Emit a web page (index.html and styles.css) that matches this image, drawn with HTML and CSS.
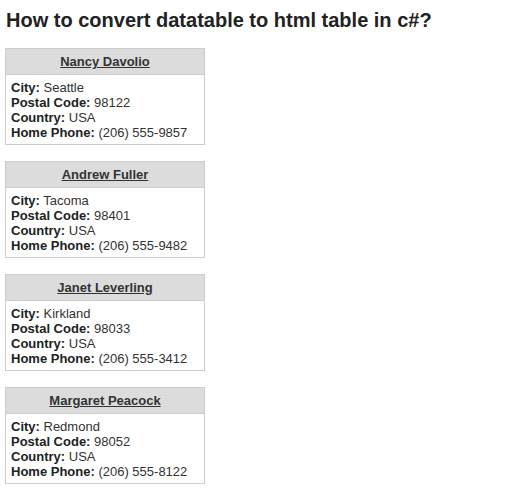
FILE: index.html
```html
<!DOCTYPE html>
<html>
<head>
<meta charset="utf-8">
<link rel="stylesheet" href="styles.css">
</head>
<body>
<h2 class="title">How to convert datatable to html table in c#?</h2>
<div class="list">
  <div class="card">
    <div class="card-head"><a href="#">Nancy Davolio</a></div>
    <div class="card-body">
      <div><b>City:</b> Seattle</div>
      <div><b>Postal Code:</b> 98122</div>
      <div><b>Country:</b> USA</div>
      <div><b>Home Phone:</b> (206) 555-9857</div>
    </div>
  </div>
  <div class="card">
    <div class="card-head"><a href="#">Andrew Fuller</a></div>
    <div class="card-body">
      <div><b>City:</b> Tacoma</div>
      <div><b>Postal Code:</b> 98401</div>
      <div><b>Country:</b> USA</div>
      <div><b>Home Phone:</b> (206) 555-9482</div>
    </div>
  </div>
  <div class="card">
    <div class="card-head"><a href="#">Janet Leverling</a></div>
    <div class="card-body">
      <div><b>City:</b> Kirkland</div>
      <div><b>Postal Code:</b> 98033</div>
      <div><b>Country:</b> USA</div>
      <div><b>Home Phone:</b> (206) 555-3412</div>
    </div>
  </div>
  <div class="card">
    <div class="card-head"><a href="#">Margaret Peacock</a></div>
    <div class="card-body">
      <div><b>City:</b> Redmond</div>
      <div><b>Postal Code:</b> 98052</div>
      <div><b>Country:</b> USA</div>
      <div><b>Home Phone:</b> (206) 555-8122</div>
    </div>
  </div>
</div>
</body>
</html>
```
FILE: styles.css
```css
body {
  margin: 0;
  padding: 0 5px;
  font-family: "Liberation Sans", Arial, sans-serif;
  color: #333;
  background: #fff;
}
.title {
  margin: 0;
  padding: 9px 1px 0;
  font-size: 20px;
  line-height: 23px;
  font-weight: bold;
  color: #222;
}
.list {
  display: flex;
  flex-direction: column;
  gap: 16px;
  padding-top: 16px;
}
.card {
  width: 198px;
  border: 1px solid #ccc;
}
.card-head {
  background: #dcdcdc;
  border-bottom: 1px solid #ccc;
  height: 25px;
  display: flex;
  align-items: center;
  justify-content: center;
  font-size: 13px;
  font-weight: bold;
}
.card-head a {
  color: #333;
  text-decoration: underline;
}
.card-body {
  padding: 5px 5px 4px;
  font-size: 13px;
  line-height: 15px;
  white-space: nowrap;
}
.card-body b {
  color: #222;
}
```
